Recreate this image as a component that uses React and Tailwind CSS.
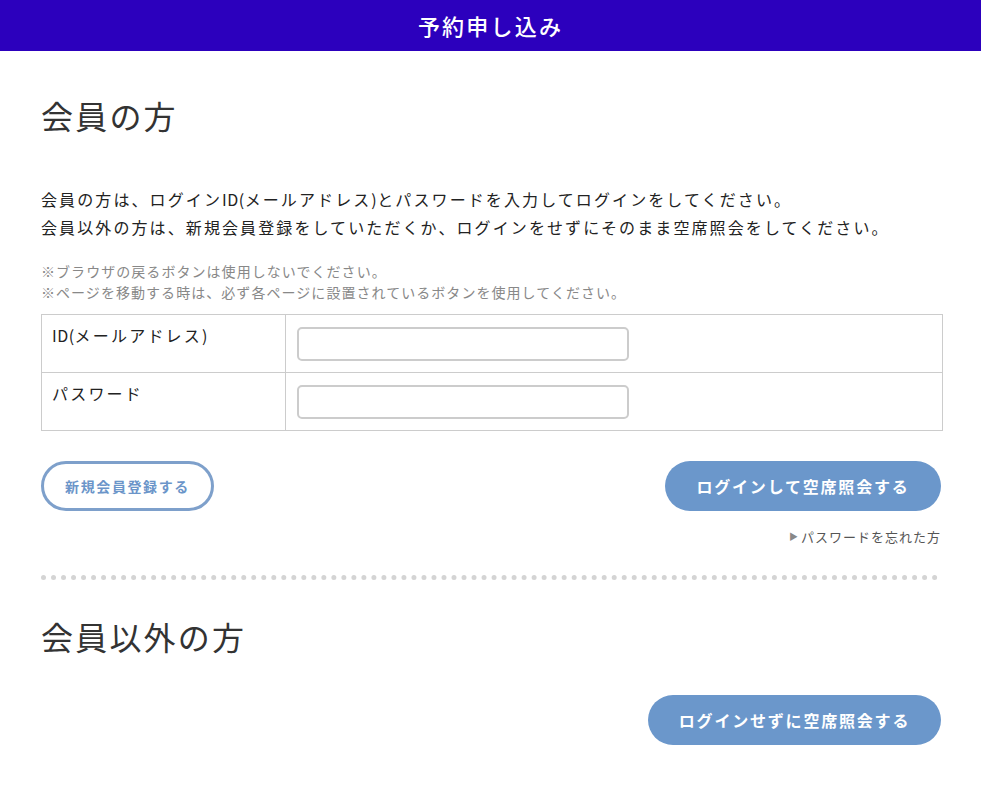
export default function App() {
  const font = { fontFamily: '"Noto Sans CJK JP", "Noto Sans", sans-serif' };
  return (
    <div className="min-h-[789px] bg-white text-[#333]" style={font}>
      <header className="h-[51px] bg-[#2c00bd] flex items-center justify-center">
        <h1 className="text-white text-[22px] font-medium tracking-[2.2px]">予約申し込み</h1>
      </header>
      <main className="px-[41px] pt-[44px]">
        <h2 className="text-[32px] leading-[40px] text-[#333] tracking-[2.2px]">会員の方</h2>
        <div className="mt-[50px] text-[16px] leading-[28px] text-[#222] tracking-[2.1px]">
          <p>会員の方は、ログイン<span className="tracking-[0.5px]">ID(</span>メールアドレス<span className="tracking-[0.5px]">)</span>とパスワードを入力してログインをしてください。</p>
          <p>会員以外の方は、新規会員登録をしていただくか、ログインをせずにそのまま空席照会をしてください。</p>
        </div>
        <div className="mt-[20px] text-[14px] leading-[21px] text-[#888] tracking-[1.05px]">
          <p>※ブラウザの戻るボタンは使用しないでください。</p>
          <p>※ページを移動する時は、必ず各ページに設置されているボタンを使用してください。</p>
        </div>
        <div className="mt-[11px] w-[902px] border border-[#ccc]">
          <div className="flex h-[58px] border-b border-[#ccc]">
            <div className="w-[244px] border-r border-[#ccc] px-[10px] pt-[8px] text-[16px] leading-[24px] text-[#222] tracking-[2.2px]"><span className="tracking-[0.5px]">ID(</span>メールアドレス)</div>
            <div className="pl-[11px] pt-[12px]">
              <input className="w-[332px] h-[34px] border-2 border-[#ccc] rounded-[5px] outline-none px-2" />
            </div>
          </div>
          <div className="flex h-[57px]">
            <div className="w-[244px] border-r border-[#ccc] px-[10px] pt-[8px] text-[16px] leading-[24px] text-[#222] tracking-[2.2px]">パスワード</div>
            <div className="pl-[11px] pt-[12px]">
              <input type="password" className="w-[332px] h-[34px] border-2 border-[#ccc] rounded-[5px] outline-none px-2" />
            </div>
          </div>
        </div>
        <div className="mt-[30px] flex justify-between items-center w-[900px]">
          <button className="w-[173px] h-[50px] rounded-full border-[3px] border-[#7ea0cb] text-[#6b95c9] text-[14px] font-bold bg-white tracking-[1.6px]">新規会員登録する</button>
          <button className="w-[276px] h-[50px] rounded-full bg-[#6b97cb] text-white text-[16px] font-bold tracking-[1.8px]">ログインして空席照会する</button>
        </div>
        <div className="w-[900px] flex justify-end mt-[16px]">
          <a className="text-[13px] leading-[20px] text-[#555] flex items-center tracking-[1px]">
            <span className="text-[#888] text-[9px] mr-[2px]">▶</span>パスワードを忘れた方
          </a>
        </div>
        <div className="mt-[28px] w-[897px] border-t-[5px] border-dotted border-[#d4d4d4]" />
        <h2 className="mt-[36px] text-[32px] leading-[40px] text-[#333] tracking-[2.2px]">会員以外の方</h2>
        <div className="mt-[39px] w-[900px] flex justify-end">
          <button className="w-[293px] h-[50px] rounded-full bg-[#6b97cb] text-white text-[16px] font-bold tracking-[1.8px]">ログインせずに空席照会する</button>
        </div>
      </main>
    </div>
  );
}
